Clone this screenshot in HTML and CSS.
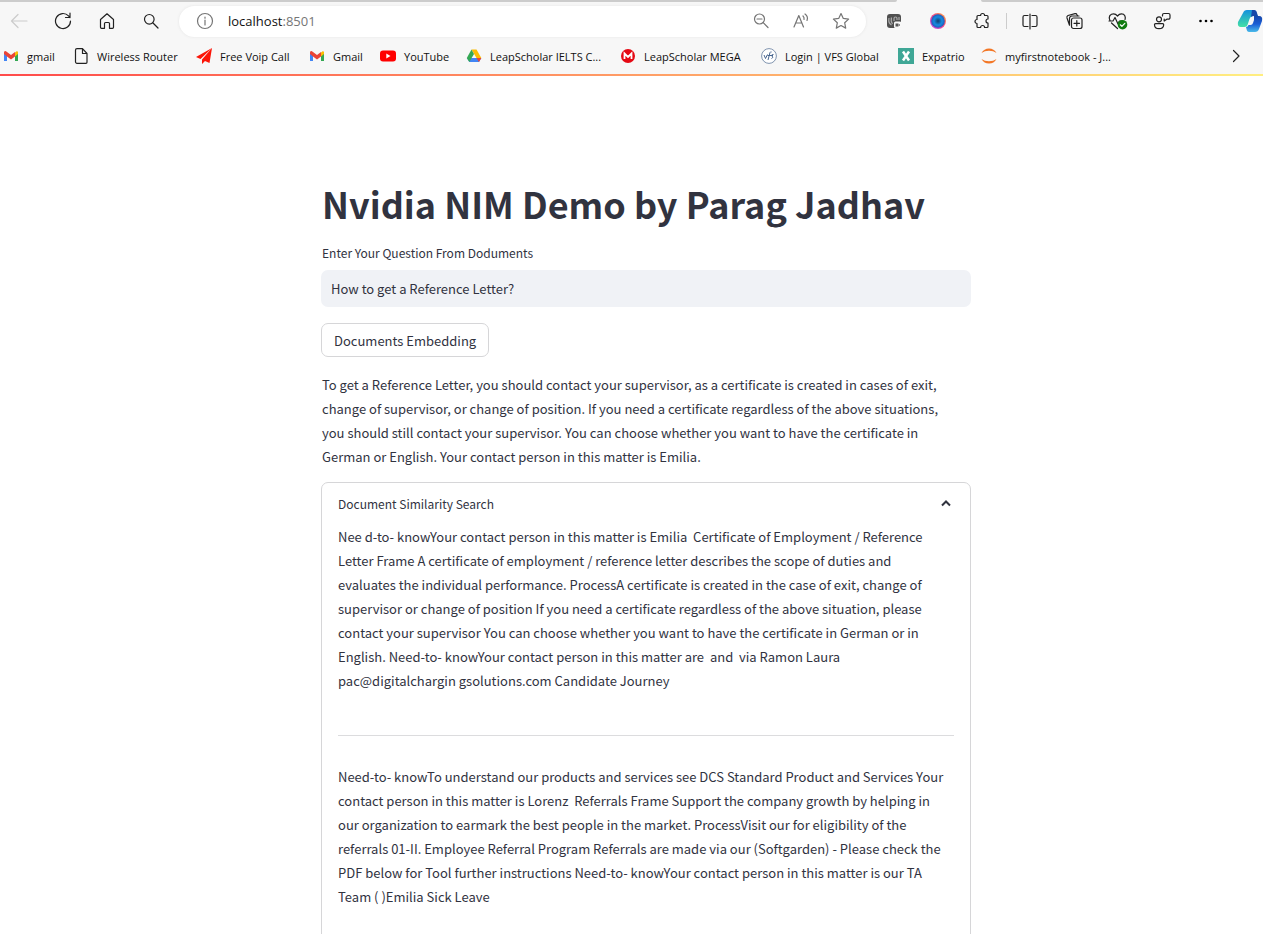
FILE: index.html
```html
<!DOCTYPE html>
<html lang="en">
<head>
<meta charset="utf-8">
<title>Nvidia NIM Demo</title>
<link rel="stylesheet" href="styles.css">
</head>
<body>
<div class="window">
  <header class="chrome">
    <div class="tabs-edge"><span></span><span></span></div>
    <div class="toolbar">
      <div class="group">
        <button class="tool" aria-label="Back"><svg class="icon faded" width="18" height="18" viewBox="0 0 18 18"><path d="M17 9H1.500M8 2.500L1.500 9L8 15.500"/></svg></button>
        <button class="tool" aria-label="Refresh"><svg class="icon" width="18" height="18" viewBox="0 0 18 18"><path d="M16.500 9a7.500 7.500 0 1 1-2-5.100L16 5.500M16 1v4.500h-4.500"/></svg></button>
        <button class="tool" aria-label="Home"><svg class="icon" width="18" height="18" viewBox="0 0 18 18"><path d="M2.500 7.500L9 1.800l6.500 5.700v7.800a1 1 0 0 1-1 1h-3v-4.800a1 1 0 0 0-1-1h-3a1 1 0 0 0-1 1v4.800h-3a1 1 0 0 1-1-1z"/></svg></button>
        <button class="tool" aria-label="Search"><svg class="icon" width="18" height="18" viewBox="0 0 18 18"><circle cx="7.300" cy="7.300" r="4.800"/><path d="M11 11l5 5"/></svg></button>
      </div>
      <div class="address">
        <svg class="icon gray" width="18" height="18" viewBox="0 0 18 18"><circle cx="9" cy="9" r="7.500"/><path d="M9 8v5M9 5v1.200"/></svg>
        <div class="url" role="textbox" aria-label="Address">localhost<span>:8501</span></div>
        <button class="inner" aria-label="Zoom out"><svg class="icon gray" width="18" height="18" viewBox="0 0 18 18"><circle cx="7.500" cy="7" r="5"/><path d="M11.200 10.700L16 15.500M5 7h5"/></svg></button>
        <button class="inner" aria-label="Read aloud"><svg class="icon gray" width="18" height="18" viewBox="0 0 18 18"><path d="M2 15L6.800 3.500L11.500 15M3.700 11h6.200M11 4q1.500 1.500 1 3.500M13 2q3.500 2.500 2 6.500"/></svg></button>
        <button class="inner" aria-label="Favourite"><svg class="icon gray" width="18" height="18" viewBox="0 0 18 18"><path d="M9 1.500l2.300 4.900 5.300.7-3.900 3.700 1 5.300L9 13.500l-4.700 2.600 1-5.300L1.400 7.100l5.300-.7z"/></svg></button>
      </div>
      <div class="group">
        <button class="tool" aria-label="Extension"><svg width="18" height="18" viewBox="0 0 18 18"><rect x="2" y="2" width="14" height="14" rx="3" fill="#4f4f4f"/><path d="M4 6q-1 5 2.500 7M6.500 5.500q-1 4 1 6.500M9 9V6.500q0-1.500 1.500-1.500t1.500 1.500V8M14 5v3" stroke="#aaa" stroke-width="1.200" fill="none"/><rect x="9" y="9.500" width="7.500" height="6.500" rx="1.500" fill="#f7f7f7"/><path d="M10.500 11.500h3v3h-3zM13.500 13l1.500-1v2z" fill="#555"/></svg></button>
        <button class="tool" aria-label="Profile extension"><svg width="18" height="18" viewBox="0 0 18 18"><defs><linearGradient id="ring" x1="0" y1="1" x2="1" y2="0"><stop offset="0" stop-color="#a64bf4"/><stop offset=".5" stop-color="#f0448c"/><stop offset="1" stop-color="#ffab35"/></linearGradient><radialGradient id="lens"><stop offset="0" stop-color="#123b72"/><stop offset=".6" stop-color="#168be0"/><stop offset="1" stop-color="#2159b7"/></radialGradient></defs><circle cx="9" cy="9" r="8" fill="url(#ring)"/><circle cx="9" cy="9" r="6.800" fill="url(#lens)"/></svg></button>
        <button class="tool" aria-label="Extensions"><svg class="icon" width="18" height="18" viewBox="0 0 18 18"><path d="M6 3.500h1.600a2 2 0 0 1 4 0H14a1 1 0 0 1 1 1V7a2 2 0 0 0 0 4v3.500a1 1 0 0 1-1 1h-2.400a2 2 0 0 0-4 0H5a1 1 0 0 1-1-1V11.500a2 2 0 1 1 0-4V4.500a1 1 0 0 1 1-1z"/></svg></button>
      </div>
      <span class="separator"></span>
      <div class="group">
        <button class="tool" aria-label="Split screen"><svg class="icon" width="18" height="18" viewBox="0 0 18 18"><path d="M7 3.500H3.500a1.500 1.500 0 0 0-1.500 1.500v8a1.500 1.500 0 0 0 1.500 1.500H7M11 3.500h3.500a1.500 1.500 0 0 1 1.500 1.500v8a1.500 1.500 0 0 1-1.500 1.500H11M9 2v15"/></svg></button>
        <button class="tool" aria-label="Collections"><svg class="icon" width="18" height="18" viewBox="0 0 18 18"><rect x="6.500" y="6" width="10.500" height="10.500" rx="2"/><path d="M11.800 8.500v5.500M9 11.300h5.500M4.500 13.200L2 6q-.5-1.800 1-2.500L10 1.700q1.500-.3 2 1l.8 1.300M4.500 13.200V6.500A2.500 2.500 0 0 1 7 4h7"/></svg></button>
        <button class="tool" aria-label="Browser essentials"><svg class="icon" width="20" height="18" viewBox="0 0 20 18"><path d="M2 8.500Q0 4 3.500 2.300Q7 1 9.500 4Q12 1 15.500 2.300Q18 4 17 7.500M3.500 11l6 5.500M1 9h4l2-3.500L10 12l1.500-3h2"/><circle cx="14.500" cy="12.700" r="4.800" fill="#107c10" stroke="none"/><path class="white" d="M12.300 12.800l1.600 1.500 2.900-3"/></svg></button>
        <button class="tool" aria-label="Feedback"><svg class="icon" width="18" height="18" viewBox="0 0 18 18"><circle cx="6" cy="7.300" r="2.500"/><path d="M2.500 11.700h7.200a1 1 0 0 1 1 1q-.2 4-4.700 4t-4.500-4a1 1 0 0 1 1-1zM9.500 4V3a1.500 1.500 0 0 1 1.500-1.500h4.500A1.500 1.500 0 0 1 17 3v2.700a1.500 1.500 0 0 1-1.500 1.500h-1.700l-2.600 1.800V7"/></svg></button>
        <button class="tool" aria-label="More"><svg width="18" height="18" viewBox="0 0 18 18"><circle cx="3.500" cy="9" r="1.300"/><circle cx="9" cy="9" r="1.300"/><circle cx="14.500" cy="9" r="1.300"/></svg></button>
        <button class="tool last" aria-label="Copilot"><svg width="26" height="24" viewBox="0 0 26 24"><defs><linearGradient id="teal" x1="0" y1="0" x2="0" y2="1"><stop offset="0" stop-color="#1591dd"/><stop offset="1" stop-color="#43e0a6"/></linearGradient><linearGradient id="navy" x1="0" y1="0" x2="0" y2="1"><stop offset="0" stop-color="#1848a9"/><stop offset=".5" stop-color="#1a5dd6"/><stop offset="1" stop-color="#4abbe9"/></linearGradient></defs><path d="M6 4Q7 1 10 1h6q3 0 3.500 3l1 3h-4q-3 0-4 3l-2 6q-.6 2-3 2H4q-4 0-3-5z" fill="url(#teal)"/><path d="M15 1h2q2.500 0 3 3l1 3h-4q-2 0-3 1z" fill="#1848a9"/><path d="M17 7h5q4 0 3 5l-3 8q-1 3-4 3h-6q-2 0-2.500-3L9 18q2 0 2.500-2h2q2 0 2.500-2l1-3z" fill="url(#navy)"/></svg></button>
      </div>
    </div>
    <nav class="bookmarks" aria-label="Bookmarks">
      <a href="#"><svg width="16" height="16" viewBox="0 0 16 16"><path d="M1 4v9h3V7z" fill="#4285f4"/><path d="M15 4v9h-3V7z" fill="#34a853"/><path d="M12 4.500l2-1.500 1 1v2l-3 2.500z" fill="#fbbc04"/><path d="M1 4.500Q1.500 2 4 4l4 3 4-3v4.500l-4 3-4-3-3-2.500z" fill="#ea4335"/></svg>gmail</a>
      <a href="#"><svg class="icon" width="16" height="16" viewBox="0 0 16 16"><path d="M4 .700h5.500L14 5.500v8.800a1 1 0 0 1-1 1H4a1.500 1.500 0 0 1-1.500-1.500V2.200A1.500 1.500 0 0 1 4 .700zM9.500 1v4.500H14"/></svg>Wireless Router</a>
      <a href="#"><svg width="16" height="16" viewBox="0 0 16 16"><path d="M16 0L0 9l4.500 2zM16 0L6 11.500V16l3-3 4.500 2z" fill="#fb1508"/></svg>Free Voip Call</a>
      <a href="#"><svg width="16" height="16" viewBox="0 0 16 16"><path d="M1 4v9h3V7z" fill="#4285f4"/><path d="M15 4v9h-3V7z" fill="#34a853"/><path d="M12 4.500l2-1.500 1 1v2l-3 2.500z" fill="#fbbc04"/><path d="M1 4.500Q1.500 2 4 4l4 3 4-3v4.500l-4 3-4-3-3-2.500z" fill="#ea4335"/></svg>Gmail</a>
      <a href="#"><svg width="16" height="16" viewBox="0 0 16 16"><rect y="2.500" width="16" height="11" rx="3" fill="#f00"/><path d="M6.300 5.500v5l4.200-2.500z" fill="#fff"/></svg>YouTube</a>
      <a href="#"><svg width="16" height="16" viewBox="0 0 16 16"><path d="M5.500 1.500h5L15.300 10h-4.800z" fill="#fbbc04"/><path d="M3.300 10h12L13 14H3.300L.800 10z" fill="#4285f4"/><path d="M10.500 10h4.800L13 14z" fill="#ea4335"/><path d="M5.500 1.500L.800 10l2.500 4 4.700-8z" fill="#34a853"/></svg>LeapScholar IELTS C...</a>
      <a href="#"><svg width="16" height="16" viewBox="0 0 16 16"><circle cx="8" cy="8" r="7" fill="#e50914"/><path d="M4.500 11V5.500L8 9l3.500-3.500V11" fill="none" stroke="#fff" stroke-width="1.800"/></svg>LeapScholar MEGA</a>
      <a href="#"><svg width="16" height="16" viewBox="0 0 16 16"><circle cx="8" cy="8" r="7.400" fill="#fff" stroke="#7f93ae"/><path d="M3 7l1.500 3.500L6.500 6.500M7 12l2-7.500q.5-1 1.500-.5M6.500 7.500h5.500M12.500 6.500q-2.500 0-1.500 1.500 2 1.500-.5 2.500" fill="none" stroke="#47658f"/></svg>Login | VFS Global</a>
      <a href="#"><svg width="16" height="16" viewBox="0 0 16 16"><path d="M0 0h16v16H0z" fill="#3fa796"/><path d="M5 3.500l6 9M11 3.500l-6 9" stroke="#fff" stroke-width="2.500"/></svg>Expatrio</a>
      <a href="#"><svg width="16" height="16" viewBox="0 0 16 16"><path d="M.500 5Q3 .500 8 .500T15.500 5Q12.500 2.800 8 2.800T.500 5zM.500 11Q3 15.500 8 15.500T15.500 11Q12.500 13.200 8 13.200T.500 11z" fill="#f37726"/></svg>myfirstnotebook - J...</a>
      <button class="more" aria-label="More bookmarks"><svg class="icon" width="16" height="16" viewBox="0 0 16 16"><path d="M5.500 2.500L11 8l-5.500 5.500"/></svg></button>
    </nav>
    <div class="decoration"></div>
  </header>
  <main class="page">
    <div class="column">
      <h1>Nvidia NIM Demo by Parag Jadhav</h1>
      <label for="question">Enter Your Question From Doduments</label>
      <input id="question" type="text" value="How to get a Reference Letter?">
      <button class="embed">Documents Embedding</button>
      <p class="answer">To get a Reference Letter, you should contact your supervisor, as a certificate is created in cases of exit,<br>change of supervisor, or change of position. If you need a certificate regardless of the above situations,<br>you should still contact your supervisor. You can choose whether you want to have the certificate in<br>German or English. Your contact person in this matter is Emilia.</p>
      <details class="expander" open>
        <summary>Document Similarity Search<svg class="chevron" width="16" height="16" viewBox="0 0 16 16"><path d="M4 10.500l4-4 4 4"/></svg></summary>
        <div class="results">
          <p>Nee d-to- knowYour contact person in this matter is Emilia&nbsp; Certificate of Employment / Reference<br>Letter Frame A certificate of employment / reference letter describes the scope of duties and<br>evaluates the individual performance. ProcessA certificate is created in the case of exit, change of<br>supervisor or change of position If you need a certificate regardless of the above situation, please<br>contact your supervisor You can choose whether you want to have the certificate in German or in<br>English. Need-to- knowYour contact person in this matter are&nbsp; and&nbsp; via Ramon Laura<br>pac@digitalchargin gsolutions.com Candidate Journey</p>
          <hr>
          <p>Need-to- knowTo understand our products and services see DCS Standard Product and Services Your<br>contact person in this matter is Lorenz&nbsp; Referrals Frame Support the company growth by helping in<br>our organization to earmark the best people in the market. ProcessVisit our for eligibility of the<br>referrals 01-II. Employee Referral Program Referrals are made via our (Softgarden) - Please check the<br>PDF below for Tool further instructions Need-to- knowYour contact person in this matter is our TA<br>Team ( )Emilia Sick Leave</p>
        </div>
      </details>
    </div>
  </main>
</div>
</body>
</html>
```
FILE: styles.css
```css
* { box-sizing: border-box; }
body { margin: 0; background: #fff; color: #31333f; font-family: "Noto Sans CJK SC", "Noto Sans", sans-serif; }
button { border: 0; padding: 0; background: none; color: inherit; font: inherit; }
svg { flex: none; }

.window { display: flex; flex-direction: column; height: 100vh; overflow: hidden; }

.chrome { flex: none; background: #f7f7f7; color: #111; font-family: "Open Sans", "Noto Sans", sans-serif; }
.tabs-edge { display: flex; gap: 84px; height: 2px; }
.tabs-edge span { background: #ccc; }
.tabs-edge span:first-child { width: 71%; border-bottom-right-radius: 2px; }
.tabs-edge span:last-child { flex: 1; border-bottom-left-radius: 2px; }

.toolbar { display: flex; align-items: center; height: 38px; overflow: hidden; }
.group { display: flex; flex: none; gap: 6px; }
.tool { display: flex; align-items: center; justify-content: center; width: 38px; height: 30px; }
.tool.last { justify-content: flex-end; width: 32px; }
.separator { width: 1px; height: 16px; margin: 0 4px 0 5px; background: #ccc; }
.address { display: flex; align-items: center; flex: 1; height: 31px; margin: 0 9px; padding: 0 5px 0 17px; border-radius: 16px; background: #fff; box-shadow: 0 0 3px #e4e4e4; }
.url { flex: 1; margin-left: 14px; font-size: 13px; }
.url span { color: #767676; }
.inner { display: flex; align-items: center; justify-content: center; width: 40px; height: 30px; }

.icon { fill: none; stroke: #222; stroke-width: 1.2; stroke-linecap: round; stroke-linejoin: round; }
.gray { stroke: #757575; }
.faded { stroke: #ccc; }
.white { stroke: #fff; }

.bookmarks { display: grid; grid-template-columns: 70px 123px 113px 71px 86px 154px 141px 137px 83px 1fr 40px; align-items: center; height: 34px; padding: 0 7px 2px 3px; font-size: 11px; }
.bookmarks a { display: flex; align-items: center; gap: 8px; color: inherit; text-decoration: none; white-space: nowrap; }
.more { display: flex; justify-content: center; }
.decoration { height: 2px; background: linear-gradient(90deg, #ff4b4b, #ffee80); }

.page { flex: 1; min-height: 0; padding: 96px 0 0 29px; overflow: hidden; }
.column { display: flex; flex-direction: column; max-width: 650px; margin: 0 auto; }
h1 { margin: 0; padding: 7px 1px 14px; font-size: 36px; line-height: 48px; font-weight: 700; }
label { padding-left: 1px; font-size: 12px; line-height: 24px; }
#question { height: 37px; margin-top: 5px; padding: 0 10px; border: 0; border-radius: 7px; background: #f0f2f6; color: inherit; font-family: inherit; font-size: 13px; }
.embed { align-self: flex-start; height: 34px; margin-top: 16px; padding: 0 12px; border: 1px solid #d6d6d8; border-radius: 7px; font-size: 13px; }
p { margin: 0; font-size: 13px; line-height: 24px; white-space: nowrap; }
.answer { margin-top: 16px; padding-left: 1px; }
.expander { margin-top: 13px; border: 1px solid #d6d6d8; border-radius: 7px; }
summary { display: flex; align-items: center; justify-content: space-between; height: 40px; padding: 0 16px; font-size: 12px; list-style: none; }
.chevron { fill: none; stroke: #31333f; stroke-width: 2; }
.results { padding: 2px 16px 64px; }
hr { margin: 42px 0 29px; border: 0; border-top: 1px solid #dcdcde; }
```
